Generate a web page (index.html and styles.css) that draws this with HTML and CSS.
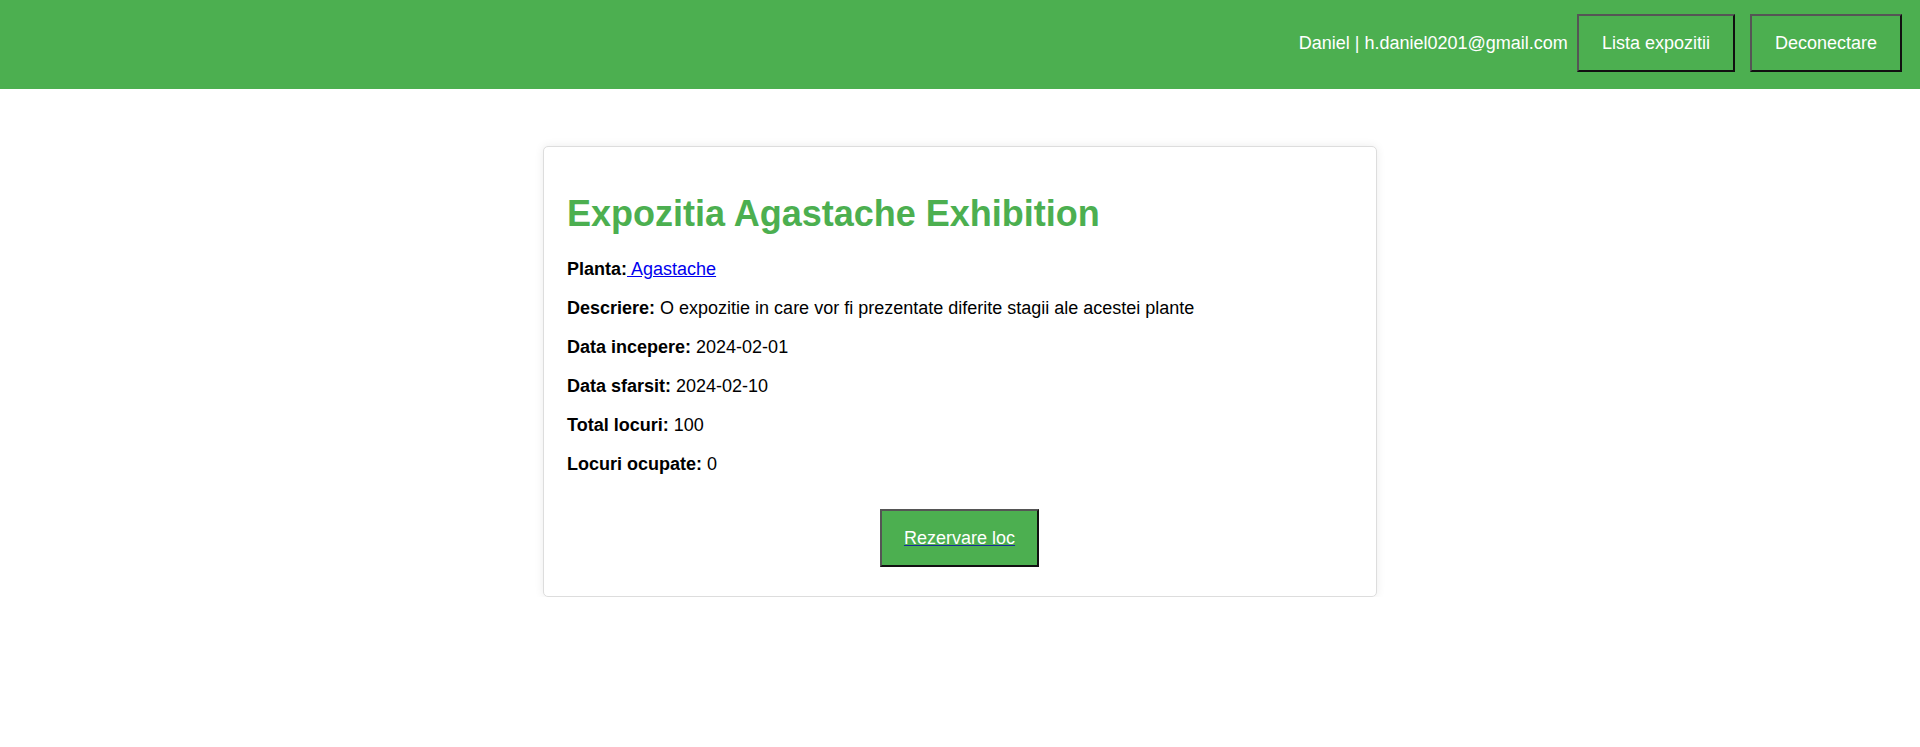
FILE: index.html
```html
<!DOCTYPE html>
<html lang="ro">
<head>
<meta charset="utf-8">
<title>Expozitia Agastache Exhibition</title>
<link rel="stylesheet" href="styles.css">
</head>
<body>
<header class="topbar">
  <span class="user">Daniel | h.daniel0201@gmail.com</span>
  <button class="nav-btn">Lista expozitii</button>
  <button class="nav-btn">Deconectare</button>
</header>
<main class="page">
  <section class="card">
    <h1 class="title">Expozitia Agastache Exhibition</h1>
    <p><strong>Planta:</strong><a href="#" class="plant-link"> Agastache</a></p>
    <p><strong>Descriere:</strong> O expozitie in care vor fi prezentate diferite stagii ale acestei plante</p>
    <p><strong>Data incepere:</strong> 2024-02-01</p>
    <p><strong>Data sfarsit:</strong> 2024-02-10</p>
    <p><strong>Total locuri:</strong> 100</p>
    <p><strong>Locuri ocupate:</strong> 0</p>
    <div class="actions">
      <button class="reserve-btn"><span class="reserve-label">Rezervare loc</span></button>
    </div>
  </section>
</main>
</body>
</html>
```

FILE: styles.css
```css
html, body {
  margin: 0;
  padding: 0;
  background: #ffffff;
}

body {
  font-family: "Liberation Sans", Arial, sans-serif;
  font-size: 18px;
  color: #000000;
}

.topbar {
  background: #4caf50;
  height: 89px;
  box-sizing: border-box;
  padding: 14px 18px 17px 18px;
  display: flex;
  align-items: center;
  justify-content: flex-end;
}

.user {
  color: #ffffff;
  font-size: 18px;
  margin-right: 9px;
}

.nav-btn {
  font-family: "Liberation Sans", Arial, sans-serif;
  font-size: 18px;
  line-height: 22px;
  color: #ffffff;
  background: #4caf50;
  padding: 16px 23px;
  border-width: 2px;
  border-style: solid;
  border-color: #555555 #111111 #111111 #555555;
  margin: 0;
  cursor: pointer;
}

.nav-btn + .nav-btn {
  margin-left: 15px;
}

.page {
  display: flex;
  justify-content: center;
  padding-top: 57px;
}

.card {
  width: 785px;
  padding: 20px 24px 20px 23px;
  border: 1px solid #dddddd;
  border-radius: 5px;
  box-shadow: 0 0 10px rgba(0, 0, 0, 0.08);
  background: #ffffff;
}

.title {
  color: #4caf50;
  font-size: 36px;
  font-weight: bold;
  margin: 26px 0 24px 0;
}

.card p {
  margin: 18px 0;
  line-height: 21px;
}

.plant-link {
  color: #0000ee;
  text-decoration: underline;
}

.actions {
  margin: 34px 0 9px 0;
  display: flex;
  justify-content: center;
}

.reserve-btn {
  font-family: "Liberation Sans", Arial, sans-serif;
  font-size: 18px;
  line-height: 22px;
  color: #ffffff;
  background: #4caf50;
  padding: 16px 22px;
  border-width: 2px;
  border-style: solid;
  border-color: #555555 #111111 #111111 #555555;
  cursor: pointer;
}

.reserve-label {
  text-decoration: underline;
  text-decoration-color: #1a2a9a;
}
```
